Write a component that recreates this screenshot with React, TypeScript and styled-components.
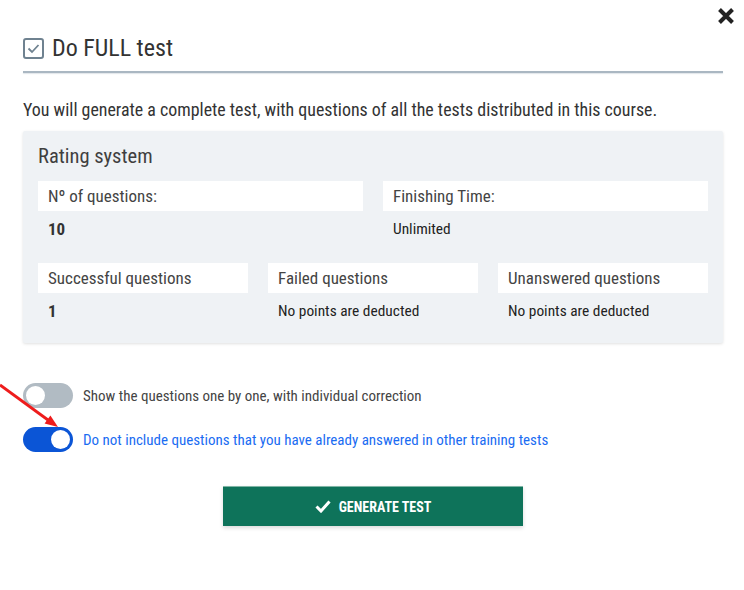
import React from "react";
import styled, { createGlobalStyle } from "styled-components";

const Global = createGlobalStyle`
  html, body { margin: 0; padding: 0; background: #fff; }
  body { font-family: "Roboto Condensed", Roboto, "Liberation Sans", sans-serif; color: #333; }
  * { box-sizing: border-box; }
`;

const Page = styled.div`
  position: relative;
  width: 744px;
  height: 590px;
  padding: 34px 21px 0 23px;
  overflow: hidden;
`;

const Close = styled.button`
  position: absolute;
  top: 6px;
  right: 8px;
  width: 20px;
  height: 20px;
  border: 0;
  padding: 0;
  background: transparent;
  display: flex;
  align-items: center;
  justify-content: center;
`;

const Header = styled.div`
  display: flex;
  align-items: center;
  gap: 8px;
  height: 28px;
`;

const Title = styled.h1`
  margin: 0;
  font-size: 24px;
  font-weight: 400;
  color: #333;
`;

const Rule = styled.div`
  margin-top: 9px;
  height: 2px;
  background: #aab7c2;
  box-shadow: 0 1px 1px rgba(170, 183, 194, 0.35);
`;

const Intro = styled.p`
  margin: 26px 0 0;
  font-size: 17.9px;
  line-height: 22px;
  color: #333;
`;

const Panel = styled.section`
  margin-top: 10px;
  background: #eff2f5;
  border-radius: 2px;
  box-shadow: 0 1px 3px rgba(0, 0, 0, 0.12);
  padding: 13px 15px 14px 15px;
`;

const PanelTitle = styled.h2`
  margin: 0;
  font-size: 20.5px;
  line-height: 24px;
  font-weight: 400;
  color: #3f3f3f;
`;

const Grid = styled.div<{ cols: number }>`
  display: grid;
  grid-template-columns: repeat(${(p) => p.cols}, 1fr);
  column-gap: 20px;
  margin-top: ${(p) => (p.cols === 2 ? "13px" : "16px")};
`;

const Cell = styled.div``;

const Label = styled.div`
  background: #fff;
  height: 30px;
  padding: 0 10px;
  display: flex;
  align-items: center;
  font-size: 17px;
  color: #444;
`;

const Value = styled.div<{ big?: boolean }>`
  height: 36px;
  padding: 0 10px;
  display: flex;
  align-items: center;
  font-size: ${(p) => (p.big ? "17px" : "15.4px")};
  font-weight: ${(p) => (p.big ? 700 : 400)};
  color: ${(p) => (p.big ? "#333" : "#222")};
`;

const Options = styled.div`
  margin-top: 40px;
  display: flex;
  flex-direction: column;
  gap: 19px;
`;

const Option = styled.label`
  display: flex;
  align-items: center;
  gap: 10px;
`;

const Track = styled.span<{ on?: boolean }>`
  position: relative;
  width: 50px;
  height: 25px;
  border-radius: 13px;
  background: ${(p) => (p.on ? "#0b55d6" : "#b1bbc3")};
  flex: none;
`;

const Knob = styled.span<{ on?: boolean }>`
  position: absolute;
  top: 3px;
  left: ${(p) => (p.on ? "28px" : "3px")};
  width: 19px;
  height: 19px;
  border-radius: 50%;
  background: #fff;
`;

const OptionText = styled.span<{ on?: boolean }>`
  font-size: 15px;
  color: ${(p) => (p.on ? "#1a6cf2" : "#444")};
`;

const Actions = styled.div`
  display: flex;
  justify-content: center;
  margin-top: 34px;
`;

const Button = styled.button`
  width: 300px;
  height: 40px;
  border: 0;
  background: #0e735a;
  color: #fff;
  font-family: inherit;
  font-size: 14px;
  font-weight: 700;
  display: flex;
  align-items: center;
  justify-content: center;
  gap: 8px;
  box-shadow: 0 2px 4px rgba(0, 0, 0, 0.15);
  border-top: 1px solid #7fb5a5;
`;

const Arrow = styled.svg`
  position: absolute;
  left: 0;
  top: 380px;
`;

export default function App() {
  return (
    <>
      <Global />
      <Page>
        <Close aria-label="close">
          <svg width="18" height="18" viewBox="0 0 18 18">
            <path d="M2.5 2.5 L15.5 15.5 M15.5 2.5 L2.5 15.5" stroke="#222" strokeWidth="4" strokeLinecap="butt" />
          </svg>
        </Close>
        <Header>
          <svg width="21" height="21" viewBox="0 0 21 21">
            <rect x="1" y="1" width="19" height="19" rx="2" fill="none" stroke="#6f8290" strokeWidth="2" />
            <path d="M5.5 10.5 L9 14 L15.5 7" fill="none" stroke="#6f8290" strokeWidth="1.8" />
          </svg>
          <Title>Do FULL test</Title>
        </Header>
        <Rule />
        <Intro>You will generate a complete test, with questions of all the tests distributed in this course.</Intro>
        <Panel>
          <PanelTitle>Rating system</PanelTitle>
          <Grid cols={2}>
            <Cell>
              <Label>Nº of questions:</Label>
              <Value big>10</Value>
            </Cell>
            <Cell>
              <Label>Finishing Time:</Label>
              <Value>Unlimited</Value>
            </Cell>
          </Grid>
          <Grid cols={3}>
            <Cell>
              <Label>Successful questions</Label>
              <Value big>1</Value>
            </Cell>
            <Cell>
              <Label>Failed questions</Label>
              <Value>No points are deducted</Value>
            </Cell>
            <Cell>
              <Label>Unanswered questions</Label>
              <Value>No points are deducted</Value>
            </Cell>
          </Grid>
        </Panel>
        <Options>
          <Option>
            <Track>
              <Knob />
            </Track>
            <OptionText>Show the questions one by one, with individual correction</OptionText>
          </Option>
          <Option>
            <Track on>
              <Knob on />
            </Track>
            <OptionText on>Do not include questions that you have already answered in other training tests</OptionText>
          </Option>
        </Options>
        <Actions>
          <Button>
            <svg width="16" height="13" viewBox="0 0 16 13">
              <path d="M1.5 6.5 L6 11 L14.5 1.5" fill="none" stroke="#fff" strokeWidth="3" />
            </svg>
            GENERATE TEST
          </Button>
        </Actions>
        <Arrow width="64" height="56" viewBox="0 0 64 56">
          <line x1="0" y1="5" x2="48" y2="40" stroke="#ee1c1c" strokeWidth="2.8" />
          <polygon points="58,47 44.6,43.5 50.4,35.4" fill="#ee1c1c" />
        </Arrow>
      </Page>
    </>
  );
}
